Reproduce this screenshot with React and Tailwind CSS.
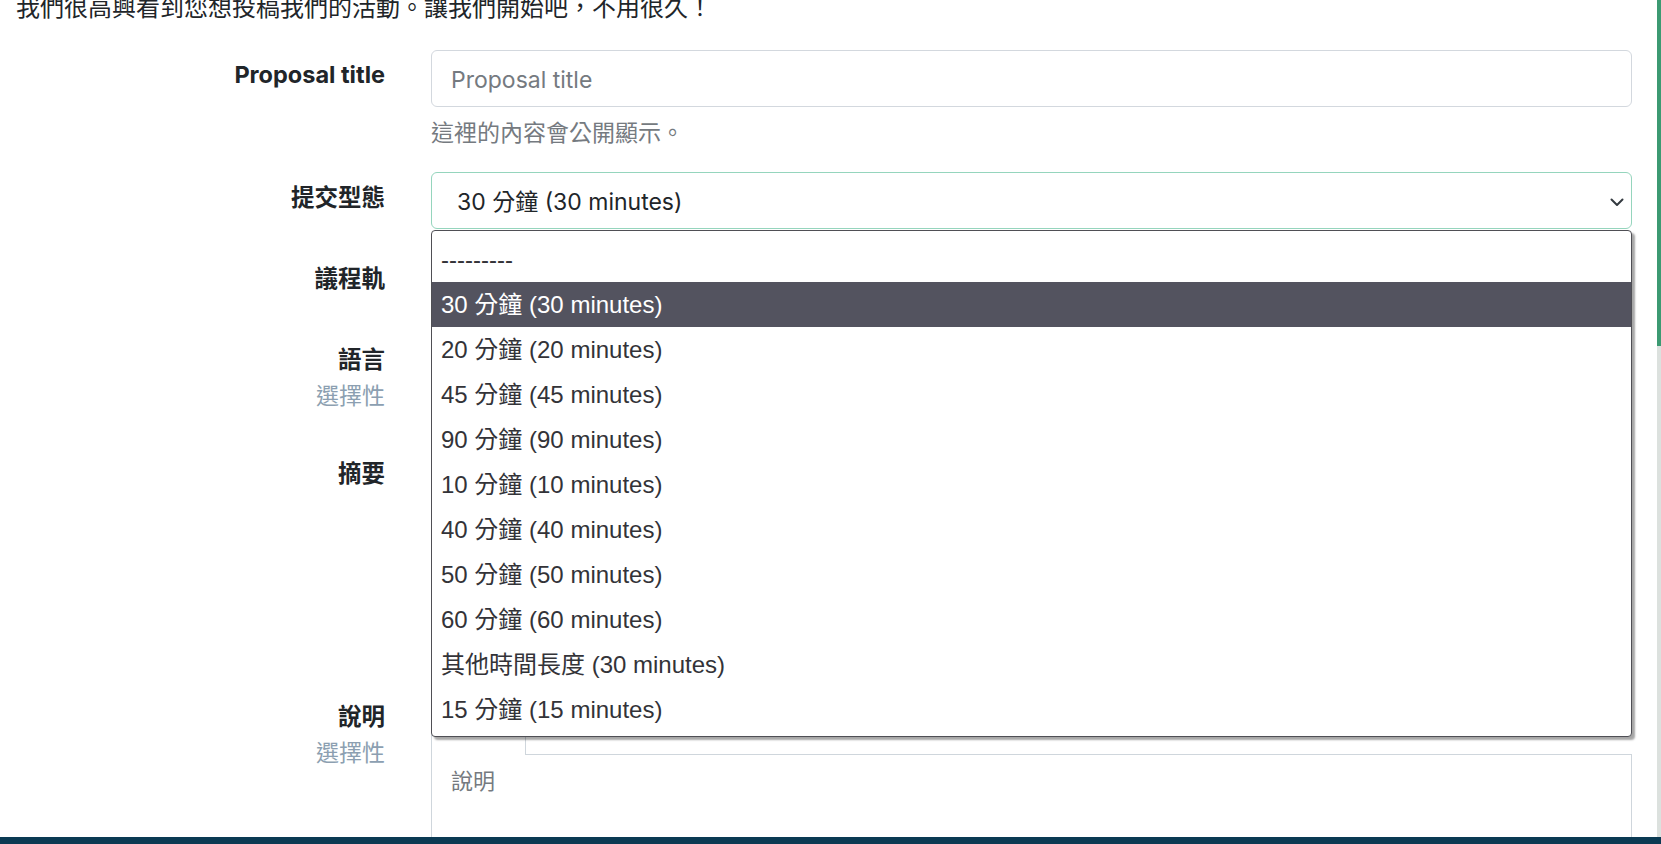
import React from "react";

const options = [
  "---------",
  "30 分鐘 (30 minutes)",
  "20 分鐘 (20 minutes)",
  "45 分鐘 (45 minutes)",
  "90 分鐘 (90 minutes)",
  "10 分鐘 (10 minutes)",
  "40 分鐘 (40 minutes)",
  "50 分鐘 (50 minutes)",
  "60 分鐘 (60 minutes)",
  "其他時間長度 (30 minutes)",
  "15 分鐘 (15 minutes)",
];

const sans = { fontFamily: '"Inter", "Noto Sans CJK TC", sans-serif' };
const arial = { fontFamily: '"Liberation Sans", "Noto Sans CJK TC", sans-serif' };

function Label({ children, optional, className = "" }) {
  return (
    <div className={"w-[385px] shrink-0 text-right " + className}>
      <div className="text-[23.5px] leading-[32px] font-bold text-[#212529]">{children}</div>
      {optional && (
        <div className="mt-[4px] text-[23px] leading-[32px] text-[#8c9fb1]">選擇性</div>
      )}
    </div>
  );
}

function Chevron() {
  return (
    <svg width="14" height="9" viewBox="0 0 14 9" fill="none">
      <path d="M1.5 1.5 L7 7 L12.5 1.5" stroke="#343a40" strokeWidth="2" strokeLinecap="round" strokeLinejoin="round" />
    </svg>
  );
}

function SelectBox({ text, focus }) {
  return (
    <div
      className={
        "h-[57px] rounded-[6px] border flex items-center justify-between pl-[25px] pr-[7px] pt-[3px] bg-white " +
        (focus ? "border-[#95d5bd]" : "border-[#d3d8de]")
      }
    >
      <span className="text-[23px] text-[#212529]">{text}</span>
      <Chevron />
    </div>
  );
}

function Editor({ placeholder }) {
  return (
    <div>
      <div className="flex h-[55px]">
        <div className="w-[95px] shrink-0 border border-b-0 border-[#cfd6dc] rounded-t-[6px] bg-white" />
        <div className="flex-1 border-b border-[#cfd6dc]" />
      </div>
      <div className="h-[180px] border border-t-0 border-[#cfd6dc] pl-[19px] pt-[10px]">
        <span className="text-[22px] leading-[32px] text-[#757a80]">{placeholder}</span>
      </div>
    </div>
  );
}

export default function App() {
  return (
    <div className="w-[1661px] h-[844px] overflow-hidden flex flex-col bg-white" style={sans}>
      <div className="flex flex-1 min-h-0">
        <main className="relative flex-1 overflow-hidden">
          <div className="pl-[16px] -mt-[10px] text-[24px] leading-[36px] text-[#212529]">
            我們很高興看到您想投稿我們的活動。讓我們開始吧，不用很久！
          </div>

          <div className="flex flex-col pr-[25px]">
            {/* Proposal title */}
            <div className="flex mt-[24px]">
              <Label className="pt-[9px]">Proposal title</Label>
              <div className="ml-[46px] flex-1">
                <div className="h-[57px] rounded-[6px] border border-[#d3d8de] flex items-center pl-[19px] pt-[3px]">
                  <span className="text-[23px] text-[#757a80]">Proposal title</span>
                </div>
                <div className="mt-[10px] text-[23px] leading-[32px] text-[#757a80]">這裡的內容會公開顯示。</div>
              </div>
            </div>

            {/* 提交型態 */}
            <div className="flex mt-[23px]">
              <Label className="pt-[10px]">提交型態</Label>
              <div className="ml-[46px] flex-1">
                <SelectBox text="30 分鐘 (30 minutes)" focus />
              </div>
            </div>

            {/* 議程軌 */}
            <div className="flex mt-[25px]">
              <Label className="pt-[9px]">議程軌</Label>
              <div className="ml-[46px] flex-1">
                <SelectBox text="" />
              </div>
            </div>

            {/* 語言 */}
            <div className="flex mt-[23px]">
              <Label className="pt-[10px]" optional>語言</Label>
              <div className="ml-[46px] flex-1">
                <SelectBox text="" />
              </div>
            </div>

            {/* 摘要 */}
            <div className="flex mt-[37px]">
              <Label className="pt-[9px]">摘要</Label>
              <div className="ml-[46px] flex-1 h-[220px] border border-[#cfd6dc] rounded-[6px]" />
            </div>

            {/* 說明 */}
            <div className="flex mt-[31px]">
              <Label className="pt-[1px]" optional>說明</Label>
              <div className="ml-[46px] flex-1">
                <Editor placeholder="說明" />
              </div>
            </div>
          </div>

          {/* open select dropdown */}
          <div
            className="absolute left-[431px] top-[230px] w-[1201px] h-[507px] bg-white border border-[#4f4f55] rounded-[4px] pt-[6px] pb-[4px] shadow-[3px_3px_2px_rgba(0,0,0,0.35)]"
            style={arial}
          >
            {options.map((o, i) => (
              <div
                key={i}
                className={
                  "h-[45px] flex items-center pl-[9px] text-[24px] " +
                  (i === 1 ? "bg-[#53535f] text-white" : "text-[#333338]")
                }
              >
                {o}
              </div>
            ))}
          </div>
        </main>
        <div className="w-[4px] flex flex-col shrink-0">
          <div className="h-[346px] bg-[#3c9a72]" />
          <div className="flex-1 bg-[#dce1de]" />
        </div>
      </div>
      <div className="h-[7px] bg-[#0b3a53] shrink-0" />
    </div>
  );
}
